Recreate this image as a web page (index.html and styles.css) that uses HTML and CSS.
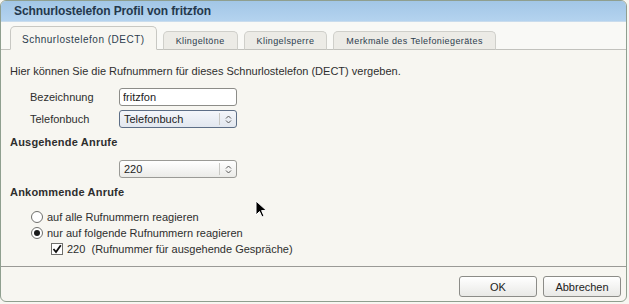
FILE: index.html
```html
<!DOCTYPE html>
<html lang="de">
  <head>
    <meta charset="UTF-8" />
    <title>Schnurlostelefon Profil</title>
    <link rel="stylesheet" href="styles.css">
  </head>
  <body>
    <div class="dialog">
      <div class="titlebar">Schnurlostelefon Profil von fritzfon</div>

      <div class="tabs">
        <div class="tab active">Schnurlostelefon (DECT)</div>
        <div class="tab">Klingeltöne</div>
        <div class="tab">Klingelsperre</div>
        <div class="tab">Merkmale des Telefoniegerätes</div>
      </div>

      <div class="content">
        <p class="intro">Hier können Sie die Rufnummern für dieses Schnurlostelefon (DECT) vergeben.</p>

        <div class="row">
          <label for="name">Bezeichnung</label>
          <input type="text" id="name" value="fritzfon" />
        </div>
        <div class="row">
          <label>Telefonbuch</label>
          <div class="select focused">
            <span>Telefonbuch</span>
            <span class="arrows">
              <svg width="7" height="9" viewBox="0 0 7 9"><path d="M1 3.5 L3.5 1 L6 3.5 M1 5.5 L3.5 8 L6 5.5" fill="none" stroke="#555" stroke-width="1"/></svg>
            </span>
          </div>
        </div>

        <h2>Ausgehende Anrufe</h2>
        <div class="row out">
          <div class="select">
            <span>220</span>
            <span class="arrows">
              <svg width="7" height="9" viewBox="0 0 7 9"><path d="M1 3.5 L3.5 1 L6 3.5 M1 5.5 L3.5 8 L6 5.5" fill="none" stroke="#555" stroke-width="1"/></svg>
            </span>
          </div>
        </div>

        <h2 class="incoming">Ankommende Anrufe</h2>
        <div class="options">
          <div class="option"><span class="radio"></span>auf alle Rufnummern reagieren</div>
          <div class="option"><span class="radio checked"></span>nur auf folgende Rufnummern reagieren</div>
          <div class="option sub">
            <span class="check">
              <svg width="10" height="10" viewBox="0 0 10 10"><path d="M1.5 5 L4 8 L8.8 1.2" fill="none" stroke="#111" stroke-width="1.8"/></svg>
            </span>220&nbsp; (Rufnummer für ausgehende Gespräche)
          </div>
        </div>
      </div>

      <div class="footer">
        <button type="button">OK</button>
        <button type="button">Abbrechen</button>
      </div>

      <svg class="cursor" width="14" height="20" viewBox="0 0 14 20">
        <path d="M1 1 L1 15 L4.5 11.5 L7 17 L9 16 L6.6 10.6 L11.5 10.6 Z" fill="#000" stroke="#fff" stroke-width="1"/>
      </svg>
    </div>
  </body>
</html>
```

FILE: styles.css
```css
* {
  box-sizing: border-box;
}
body {
  margin: 0;
  background: #f7f6f1;
  font-family: "Liberation Sans", Arial, sans-serif;
  font-size: 11px;
  color: #2e2e2e;
}
.dialog {
  position: relative;
  width: 627px;
  height: 302px;
  border: 1px solid #8f9f8f;
  border-radius: 6px;
  background: #f7f6f1;
  display: flex;
  flex-direction: column;
  overflow: hidden;
}
.titlebar {
  height: 21px;
  padding: 3px 0 0 13px;
  background: linear-gradient(#a2c6e6, #b4d3ef);
  border-bottom: 1px solid #c9dced;
  color: #24384c;
  font-size: 12px;
  font-weight: bold;
  letter-spacing: -0.1px;
}
.tabs {
  display: flex;
  align-items: flex-end;
  gap: 6px;
  height: 28px;
  padding-left: 9px;
  border-bottom: 1px solid #c2c2bd;
  background: #f9f9f6;
}
.tab {
  height: 19px;
  padding: 4px 12px 0;
  margin-bottom: -1px;
  background: #ecebe6;
  border: 1px solid #cfcfca;
  border-bottom-color: #c2c2bd;
  border-radius: 5px 5px 0 0;
  font-size: 9px;
  letter-spacing: 0.4px;
  color: #2c3d4e;
}
.tab.active {
  height: 24px;
  padding: 7px 11px 0;
  background: #f7f6f1;
  border-color: #c8c8c3;
  border-bottom-color: #f7f6f1;
  font-size: 10px;
  letter-spacing: 0.5px;
}
.content {
  flex: 1;
  padding: 0 9px;
}
.intro {
  margin: 14px 0 10px;
  line-height: 14px;
}
.row {
  display: flex;
  align-items: center;
  height: 18px;
  margin-bottom: 4px;
}
.row label {
  width: 109px;
  padding-left: 20px;
}
.row.out {
  margin: 11px 0 0 109px;
}
input[type="text"] {
  width: 118px;
  height: 18px;
  padding: 0 3px;
  border: 1px solid #8c8c88;
  border-radius: 3px;
  background: #fff;
  font-family: inherit;
  font-size: 11px;
  color: #222;
}
.select {
  display: flex;
  align-items: center;
  width: 118px;
  height: 18px;
  padding-left: 4px;
  border: 1px solid #9a9a96;
  border-radius: 3px;
  background: linear-gradient(#ffffff, #ebebe8);
  color: #222;
}
.select.focused {
  border-color: #5d6e86;
  background: linear-gradient(#f4f6fa, #e2e7ef);
}
.select span:first-child {
  flex: 1;
}
.arrows {
  display: flex;
  align-items: center;
  justify-content: center;
  width: 17px;
  height: 12px;
  border-left: 1px solid #c8c8c4;
}
h2 {
  margin: 7px 0 0;
  font-size: 11px;
  line-height: 14px;
  font-weight: bold;
  letter-spacing: 0.2px;
  color: #2e2e2e;
}
h2.incoming {
  margin-top: 7px;
}
.options {
  margin-top: 10px;
  padding-left: 21px;
}
.option {
  display: flex;
  align-items: center;
  height: 16px;
}
.option.sub {
  padding-left: 20px;
}
.radio {
  width: 12px;
  height: 12px;
  margin-right: 4px;
  border: 1px solid #6f6f6c;
  border-radius: 50%;
  background: #fff;
  display: flex;
  align-items: center;
  justify-content: center;
}
.radio.checked::after {
  content: "";
  width: 6px;
  height: 6px;
  border-radius: 50%;
  background: #1a1a1a;
}
.check {
  width: 12px;
  height: 12px;
  margin-right: 4px;
  border: 1px solid #6f6f6c;
  background: #fff;
  display: flex;
  align-items: center;
  justify-content: center;
}
.footer {
  display: flex;
  justify-content: flex-end;
  gap: 6px;
  height: 35px;
  padding: 9px 5px 0 0;
  border-top: 1px solid #9a9a96;
}
button {
  width: 78px;
  height: 21px;
  border: 1px solid #8c8c88;
  border-radius: 3px;
  background: linear-gradient(#ffffff, #e9e9e6);
  font-family: inherit;
  font-size: 11px;
  color: #222;
}
.cursor {
  position: absolute;
  left: 254px;
  top: 199px;
}
```
